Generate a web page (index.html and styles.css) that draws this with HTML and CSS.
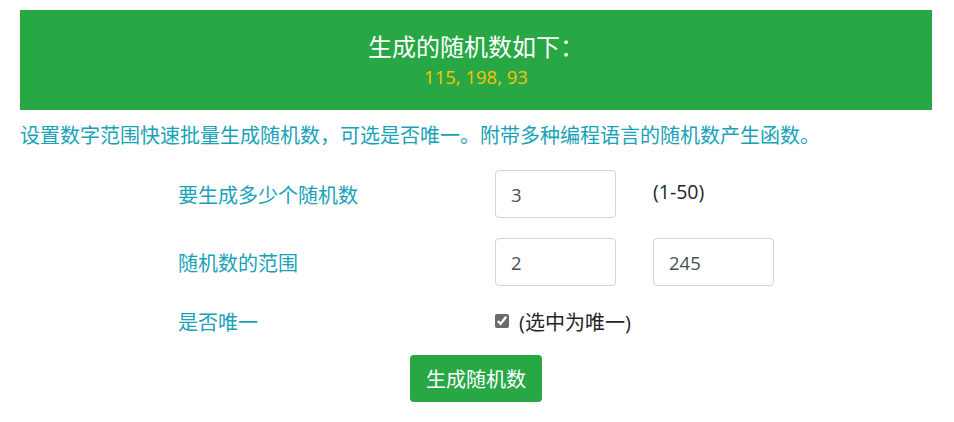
FILE: index.html
```html
<!DOCTYPE html>
<html lang="zh-CN">
<head>
<meta charset="utf-8">
<title>随机数生成</title>
<link rel="stylesheet" href="styles.css">
</head>
<body>
<div class="wrap">
  <div class="banner">
    <div class="banner-title">生成的随机数如下：</div>
    <div class="banner-nums">115, 198, 93</div>
  </div>
  <p class="desc">设置数字范围快速批量生成随机数，可选是否唯一。附带多种编程语言的随机数产生函数。</p>
  <form class="form">
    <div class="row">
      <label class="lbl">要生成多少个随机数</label>
      <input class="inp" type="text" value="3">
      <span class="hint">(1-50)</span>
    </div>
    <div class="row">
      <label class="lbl">随机数的范围</label>
      <input class="inp" type="text" value="2">
      <input class="inp" type="text" value="245">
    </div>
    <div class="row row-check">
      <label class="lbl">是否唯一</label>
      <label class="check"><input type="checkbox" class="cb" checked> (选中为唯一)</label>
    </div>
    <div class="actions">
      <button type="button" class="btn">生成随机数</button>
    </div>
  </form>
</div>
</body>
</html>
```

FILE: styles.css
```css
html, body {
  margin: 0;
  padding: 0;
  background: #fff;
}
body {
  font-family: "Open Sans", "Noto Sans CJK SC", sans-serif;
  color: #212529;
}
.wrap {
  width: 912px;
  margin-left: 20px;
  padding-top: 10px;
}
.banner {
  background: #28a745;
  text-align: center;
  padding: 19px 0 0;
  height: 81px;
}
.banner-title {
  color: #fff;
  font-size: 24px;
  line-height: 36px;
}
.banner-nums {
  color: #ffc107;
  font-size: 18.5px;
  line-height: 24px;
}
.desc {
  margin: 12px 0 0;
  color: #17a2b8;
  font-size: 20px;
  line-height: 28px;
}
.form {
  margin-top: 20px;
}
.row {
  display: grid;
  grid-template-columns: 317px 158px 121px;
  align-items: center;
  padding-left: 158px;
  height: 48px;
  margin-bottom: 20px;
}
.row-check {
  height: 30px;
  margin-bottom: 19px;
}
.lbl {
  color: #17a2b8;
  font-size: 20px;
}
.inp {
  box-sizing: border-box;
  width: 121px;
  height: 48px;
  border: 1px solid #ced4da;
  border-radius: 4px;
  padding: 0 15px;
  font-family: "Open Sans", sans-serif;
  font-size: 18.5px;
  color: #495057;
  background: #fff;
}
.hint {
  font-size: 19.5px;
  align-self: start;
  margin-top: 8px;
}
.check {
  display: flex;
  align-items: center;
  gap: 10px;
  font-size: 20px;
  white-space: nowrap;
}
.cb {
  margin: 0;
  width: 14px;
  height: 14px;
  accent-color: #6b6b6b;
}
.actions {
  text-align: center;
}
.btn {
  height: 47px;
  padding: 0 16px;
  border: none;
  border-radius: 4px;
  background: #28a745;
  color: #fff;
  font-family: "Noto Sans CJK SC", sans-serif;
  font-size: 20px;
}
```
